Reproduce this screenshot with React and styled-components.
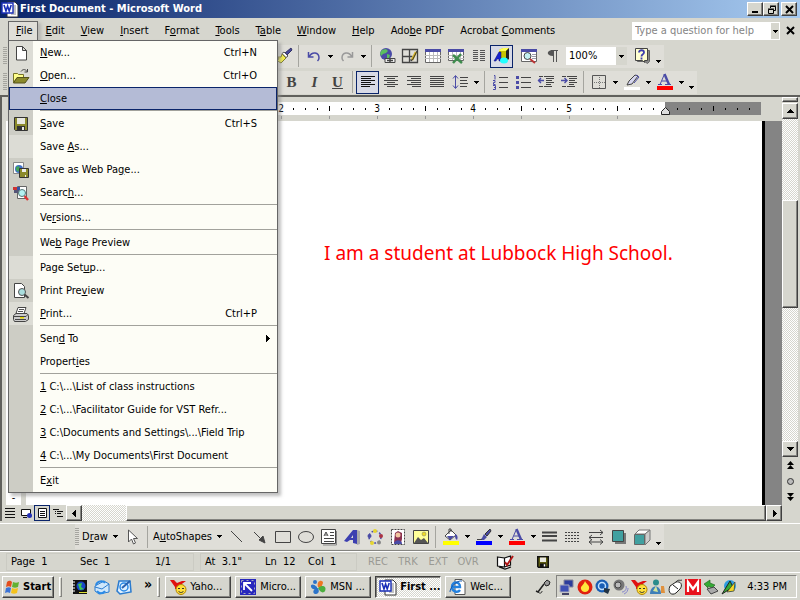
import React from 'react'
import { useState } from 'react'
import styled, { createGlobalStyle, css } from 'styled-components'

const face = '#d6d6ce'
const light = '#dfded8'
const navy = '#0a246a'

// icons, all on a 16 x 16 grid
const icons = {
    word: <>
        <path d="M5 1h8l3 3v12H5z" fill="#fff" stroke="#333" strokeWidth="1" />
        <path d="M9 5h5M11 7h3M11 9h3M11 11h3M9 13h5" stroke="#888" />
        <path d="M0 2h11v10H0z" fill="#fff" stroke="#1a2fb8" strokeWidth="1.4" />
        <path d="M2 4l2 6 1.600-5 1.600 5 2-6" fill="none" stroke="#1a2fb8" strokeWidth="1.600" />
    </>,
    page: <path d="M3.500 1.500h6l4 4v9.500h-10zM9.500 1.500v4h4" fill="#fff" stroke="#444" />,
    open: <>
        <path d="M.5 5.500h4l1 1h5v3h-6l-4 5z" fill="#ffff8c" stroke="#77752a" />
        <path d="M4 9.500h12l-4 5.500H.5z" fill="#8b8a2c" stroke="#55531c" />
        <path d="M8 3.500c2-3 5-2 6 0M14.500 1v3h-3" fill="none" stroke="#444" />
    </>,
    save: <>
        <path d="M1.500 1.500h13v13h-12l-1-1z" fill="#8b8a2c" stroke="#333" />
        <path d="M4 2h8v6H4z" fill="#e8e8e0" />
        <path d="M4 10h8v5H4z" fill="#333" />
        <path d="M9 11h2v3H9z" fill="#e8e8e0" />
    </>,
    saveWeb: <>
        <path d="M.5.5h10v11H.5z" fill="#fff" stroke="#888" />
        <circle cx="6" cy="7" r="4" fill="#3f6fc8" />
        <path d="M3 5l3-1 1 3-2 3-2-2z" fill="#41a45a" />
        <path d="M6.500 6.500h9v9h-9z" fill="#8b8a2c" stroke="#333" />
        <path d="M9 7h4v3H9zM12 13h1v2h-1z" fill="#eee" />
    </>,
    search: <>
        <path d="M4.500 1.500h9v12h-9z" fill="#fff" stroke="#666" />
        <path d="M0 2h4v3H0z" fill="#c33" /><path d="M4 2h3v3H4z" fill="#35a" /><path d="M1 5h5v3H1z" fill="#557" />
        <circle cx="9" cy="8" r="3.500" fill="#b4f1f1" stroke="#577" />
        <path d="M11.500 11l3.500 4" stroke="#d33" strokeWidth="2.400" />
    </>,
    preview: <>
        <path d="M1.500.5h7l3 3v11h-10z" fill="#fff" stroke="#444" />
        <circle cx="9" cy="9" r="3.500" fill="#a9dede" stroke="#555" />
        <path d="M11.500 11.500l4 3.500" stroke="#444" strokeWidth="2" />
    </>,
    print: <>
        <path d="M5 1.500h8l-2 6H3z" fill="#fff" stroke="#444" />
        <path d="M6 3.500h5M5 5.500h5" stroke="#555" />
        <path d="M3 7.500h11l1.500 2v4l-3 2H1.500l-1-2v-4z" fill="#ccc" stroke="#444" />
        <path d="M1 10.500h12l2-2M2 13.500h11" stroke="#444" fill="none" />
        <path d="M7 11h4v1.500H7z" fill="#e8d800" />
    </>,
    brush: <>
        <path d="M15 0l1 2-5 5-2-2z" fill="#45479c" stroke="#333366" />
        <path d="M8 4l4 4-2 1.500-4-4z" fill="#fff" stroke="#555" />
        <path d="M6 6l4 4-5 5-5-3 3-1-1-2 3 0z" fill="#f2ee4e" stroke="#7d7b32" />
    </>,
    undo: <path d="M2.500 4v5h5M3 9c3-6 10-5 10 1 0 1-.5 2-1.500 3" fill="none" stroke="#4a4ba6" strokeWidth="1.500" />,
    redo: <path d="M13.500 4v5h-5M13 9c-3-6-10-5-10 1 0 1 .5 2 1.500 3" fill="none" stroke="#999" strokeWidth="1.500" />,
    globe: <>
        <circle cx="7" cy="6" r="6" fill="#4a4ba6" />
        <path d="M3 2l4-1 2 2-2 2-3 1-2 2-1-3zM8 6l3 1-1 3-2 2z" fill="#5bbf5f" />
        <path d="M6 10.500h5v4H6zM11 10.500h5v4h-5z" fill="#eee" stroke="#444" />
        <path d="M8 12.500h6" stroke="#444" strokeWidth="1.500" />
    </>,
    tableEdit: <>
        <path d="M.5 1.500h15v13H.5zM7.500 1.500v13M.5 8.500h10" fill="none" stroke="#444" strokeWidth="1.300" />
        <path d="M14 4l-4 8" stroke="#d8b520" strokeWidth="2.500" />
        <path d="M15 3l-4.500 9-1.500 1v-2" stroke="#333" fill="none" />
    </>,
    table: <>
        <path d="M.5 1.500h15v13H.5z" fill="#fff" stroke="#666" />
        <path d="M0 1h16v3H0z" fill="#4a4ba6" />
        <path d="M0 7.500h16M0 10.500h16M4.500 4v10M8.500 4v10M12.500 4v10" stroke="#bbb" />
    </>,
    excel: <>
        <path d="M.5 1.500h15v11H.5z" fill="#fff" stroke="#666" />
        <path d="M0 1h16v3H0z" fill="#4a4ba6" />
        <path d="M0 7.500h16M0 10.500h16M4.500 4v8M8.500 4v8M12.500 4v8" stroke="#bbb" />
        <path d="M5 7l9 8M13 6L5 15" stroke="#3f8c4e" strokeWidth="2.500" />
    </>,
    columns: <path d="M2 2.500h5M2 4.500h5M2 6.500h5M2 8.500h5M2 10.500h5M2 12.500h5M9 2.500h5M9 4.500h5M9 6.500h5M9 8.500h5M9 10.500h5M9 12.500h5" stroke="#555" />,
    drawing: <>
        <path d="M5 2l4-2h6v11l-3 2H5z" fill="#c8c400" />
        <path d="M5 2l4-2h6l-3 3H5z" fill="#ffff55" />
        <path d="M12 3l3-3v11l-3 2z" fill="#222" />
        <path d="M0 13L5 4h2v9H5v-2H3l-1 2z" fill="#1822d0" stroke="#0a0f70" strokeWidth=".5" />
        <ellipse cx="10" cy="12.500" rx="4" ry="3" fill="#2ff" />
    </>,
    printPreview: <>
        <path d="M.5 1.500h15v12H.5z" fill="#fff" stroke="#666" />
        <path d="M0 1h16v3H0z" fill="#4a4ba6" />
        <path d="M11 6.500h4M11 8.500h4M11 10.500h4" stroke="#99a" />
        <circle cx="6.500" cy="8" r="3.500" fill="#c3f1f1" stroke="#444" />
        <path d="M9 11l5 4" stroke="#b33" strokeWidth="2" />
    </>,
    para: <><path d="M7 2.500h7M9.500 2v12M12.500 2v12" stroke="#555" fill="none" /><path d="M9 2c-7 0-7 6 0 6z" fill="#555" /></>,
    help: <>
        <path d="M3.500 2.500h12v11l-2 2-3-2h-7z" fill="#888" stroke="#666" />
        <path d="M1.500.5h12v12h-3v2l-2-2h-7z" fill="#ffffd0" stroke="#444" />
        <path d="M5 4.500c0-3 5-3 5 0 0 2-2.500 1.500-2.500 4M7.500 9.500v2" fill="none" stroke="#3e3fae" strokeWidth="1.800" />
    </>,
    left: <path d="M1 2.500h14M1 4.500h10M1 6.500h14M1 8.500h10M1 10.500h14M1 12.500h9" stroke="#111" />,
    center: <path d="M1 2.500h14M4 4.500h8M1 6.500h14M4 8.500h8M1 10.500h14M4 12.500h8" stroke="#444" />,
    right: <path d="M1 2.500h14M5 4.500h10M1 6.500h14M5 8.500h10M1 10.500h14M6 12.500h9" stroke="#444" />,
    justify: <path d="M1 2.500h14M1 4.500h14M1 6.500h14M1 8.500h14M1 10.500h14M1 12.500h14" stroke="#444" />,
    spacing: <>
        <path d="M8 3.500h8M8 6.500h7M8 9.500h8M8 12.500h7" stroke="#444" />
        <path d="M3.500 2v12M1 4.500l2.500-3 2.500 3M1 11.500l2.500 3 2.500-3" stroke="#4a4ba6" fill="none" />
    </>,
    numbers: <>
        <path d="M7 3.500h9M7 8.500h9M7 13.500h9" stroke="#444" />
        <path d="M2 1.500h1v4M1 6.500h2v2H1.500v2h2M1 11.500h2.500v4H1M2 13.500h1" stroke="#4a4ba6" fill="none" />
    </>,
    bullets: <>
        <path d="M6 3.500h10M6 8.500h10M6 13.500h10" stroke="#444" />
        <path d="M1 2h3v3H1zM1 7h3v3H1zM1 12h3v3H1z" fill="#4a4ba6" />
    </>,
    outdent: <>
        <path d="M1 2.500h4M6 2.500h10M8 4.500h8M8 6.500h6M8 8.500h8M8 10.500h5M1 12.500h4M6 12.500h8" stroke="#444" />
        <path d="M0 6.500h6M3 4L.5 6.500 3 9" stroke="#4a4ba6" strokeWidth="1.400" fill="none" />
    </>,
    indent: <>
        <path d="M1 2.500h4M6 2.500h10M8 4.500h8M8 6.500h6M8 8.500h8M8 10.500h5M1 12.500h4M6 12.500h8" stroke="#444" />
        <path d="M0 6.500h6M3.500 4L6 6.500 3.500 9" stroke="#4a4ba6" strokeWidth="1.400" fill="none" />
    </>,
    borders: <>
        <path d="M1.500 1.500h13v13h-13z" fill="none" stroke="#555" />
        <path d="M8.500 3v11M3 8.500h11" stroke="#777" strokeDasharray="1 1" />
    </>,
    highlight: <>
        <path d="M0 13h16v3H0z" fill="#fff" />
        <path d="M11 1l3 1-6 8-5 1 2-4z" fill="#d6d6ee" stroke="#444" />
        <path d="M12 1l3 2-5 6" fill="none" stroke="#4a4ba6" />
    </>,
    fontColor: <>
        <path d="M0 12h16v4H0z" fill="#f00" />
        <path d="M3 10.500L7.500 0M5 7h6M1 10.500h4M8 10.500h6" stroke="#4a4ba6" fill="none" />
        <path d="M7.500 0l4.500 10.500" stroke="#4a4ba6" strokeWidth="2.400" />
    </>,
    cursor: <path d="M4.500 1v12l3-3 2 5 2-1-2-4.500h4z" fill="#fff" stroke="#555" />,
    line: <path d="M2 2l11 11" stroke="#444" />,
    arrow: <path d="M2 3l8 8M13 14l-6-3 4-4z" stroke="#444" fill="#444" />,
    rect: <path d="M.5 2.500h15v11H.5z" stroke="#444" fill="none" />,
    ellipse: <ellipse cx="8" cy="8" rx="7.500" ry="5.500" stroke="#444" fill="none" />,
    textbox: <>
        <path d="M.5.5h14v14H.5z" fill="#fff" stroke="#444" />
        <path d="M15.500 2v14H2" stroke="#888" fill="none" />
        <path d="M3 7l2-4 2 4M4 6h2M9 3.500h4M9 6.500h4M3 9.500h10M3 12.500h10" stroke="#444" fill="none" />
    </>,
    wordart: <>
        <path d="M10 2l3-1 3 1v13l-3 1z" fill="#aaa" />
        <path d="M0 12L9 1h4v14l-4-1v-3H6l-3 2zM7 9h2V6z" fill="#3c3fb0" fillRule="evenodd" />
    </>,
    diagram: <>
        <circle cx="8" cy="8" r="6" fill="none" stroke="#4a4ba6" strokeWidth="1.500" strokeDasharray="2 2" />
        <circle cx="8" cy="2" r="2" fill="#e6d630" /><circle cx="2.500" cy="7" r="2" fill="#4a4ba6" />
        <circle cx="14" cy="7" r="2" fill="#a34" /><circle cx="5" cy="14" r="2" fill="#e6d630" />
        <circle cx="12" cy="13.500" r="2" fill="#888" />
    </>,
    clipart: <>
        <path d="M1.500.5h13v15h-13z" fill="#fff" stroke="#444" strokeDasharray="2 1" />
        <path d="M4 14l1-10 3-2 4 2v6l-1 4z" fill="#8b3050" />
        <circle cx="8" cy="6" r="2.500" fill="#f2c6a0" />
        <path d="M4 15c0-5 8-5 8 0z" fill="#4a4ba6" />
    </>,
    picture: <>
        <path d="M.5 1.500h15v13H.5z" fill="#ffff99" stroke="#444" />
        <path d="M1 14l4-6 3 3 3-2 4 5z" fill="#555" />
        <circle cx="11" cy="5" r="2" fill="#f0dc20" stroke="#777" strokeWidth=".5" />
    </>,
    fill: <>
        <path d="M0 12h16v4H0z" fill="#ff0" />
        <path d="M2 7l6-6 5 5-6 5z" fill="#fff" stroke="#444" />
        <path d="M12 5c3 1 3 4 2 6-2-1-2-3-2-6zM4 7h7l-4 4z" fill="#4a4ba6" />
        <path d="M6 5V0h2v3" stroke="#444" fill="none" />
    </>,
    pen: <>
        <path d="M0 12h16v4H0z" fill="#00f" />
        <path d="M14 0l1 2-4 5-2-2z" fill="#4a4ba6" stroke="#333" />
        <path d="M8 5l3 3-3 3H4l2-2z" fill="#4a4ba6" />
        <path d="M1 10.500h5" stroke="#444" />
    </>,
    lineStyle: <path d="M0 3.500h15M0 7h15M0 11.500h15" stroke="#444" strokeWidth="2" />,
    dashStyle: <path d="M0 3.500h15M0 6.500h15M0 9.500h15M0 12.500h15" stroke="#444" strokeDasharray="2 1" />,
    arrowStyle: <path d="M1 3.500h14M12 1l3 2.500-3 2.500M1 8.500h14M4 6l-3 2.500 3 2.500M1 13h14M12 10.500l3 2.500-3 2.500M4 10.500l-3 2.500 3 2.500" stroke="#444" fill="none" />,
    shadow: <><path d="M4 4h11v11H4z" fill="#777" /><path d="M1.500 1.500h11v11h-11z" fill="#41a0a0" stroke="#444" /></>,
    cube: <>
        <path d="M1 5l4-4h11l-5 4z" fill="#fff" stroke="#777" /><path d="M11 5l5-4v10l-5 5z" fill="#ccc" stroke="#777" />
        <path d="M.5 5.500h10v10H.5z" fill="#41a0a0" stroke="#666" />
    </>,
    normalView: <path d="M3 3.500h10M3 6.500h10M3 9.500h10M3 12.500h10" stroke="#111" />,
    webView: <><path d="M3.500 4.500h9v6h-9z" fill="#fff" stroke="#111" /><circle cx="11.500" cy="10.500" r="2.500" fill="#2431b4" /><path d="M5 12.500h4" stroke="#111" /></>,
    printView: <path d="M4.500 3.500h8v9h-8zM6 6.500h5M6 8.500h5M6 10.500h5" fill="#fff" stroke="#111" />,
    outlineView: <path d="M3 4.500h6M5 6.500h1M7 6.500h6M5 8.500h1M7 8.500h4M7 11.500h6" stroke="#111" />,
    book: <>
        <path d="M.5 3l7 1v9l-7-1zM7.500 4l6-2v9l-6 2zM2 13l6 2 6-2" fill="#fff" stroke="#111" strokeWidth="1.200" />
        <path d="M8 8l2 3 6-9" stroke="#b01818" strokeWidth="2" fill="none" />
    </>,
    disk: <>
        <path d="M1 1h14v14H2l-1-1z" fill="#5c5b10" stroke="#111" strokeWidth="2" />
        <path d="M4 2h8v6H4z" fill="#e8e8e0" />
        <path d="M4 10h8v5H4z" fill="#111" /><path d="M9 11h2v3H9z" fill="#fff" />
    </>,
    windows: <>
        <path d="M2 3c2-2 4-1 5 0L6 8C4 7 3 7 1 8z" fill="#e34d1d" /><path d="M8 3c2 1 4 1 6 0l-1 5c-2 1-4 1-6 0z" fill="#62b132" />
        <path d="M1 9c2-1 4-1 5 0l-1 5c-2-1-3-1-5 0z" fill="#3b73d6" /><path d="M7 9c2 1 4 1 6 0l-1 5c-2 1-4 1-6 0z" fill="#f4c21c" />
    </>,
    desktop: <>
        <path d="M1 1h14v14H1z" fill="#111" /><path d="M0 3h3M0 6h3M0 9h3M0 12h3" stroke="#fff" />
        <circle cx="9" cy="7" r="4.500" fill="#1848c8" /><path d="M6 5l4-1-1 4 3 2-4 1z" fill="#3cc850" /><path d="M7 13h8v1H7z" fill="#dd3" />
    </>,
    mail: <>
        <path d="M1 7l9-5 5 3v8l-10 2-4-3z" fill="#cfe7fb" stroke="#2a7bcf" /><path d="M1 8l7 2 7-5" fill="none" stroke="#2a7bcf" />
        <path d="M2 6c1-4 7-5 9-2M11 12c-2 3-6 3-8 0" stroke="#2a8ae6" strokeWidth="2" fill="none" />
    </>,
    notes: <>
        <path d="M3 2h11l1 11-11 2-3-3z" fill="#dff0ff" stroke="#2a7bcf" strokeWidth="1.500" />
        <circle cx="8" cy="8" r="4" fill="none" stroke="#2a8ae6" strokeWidth="1.500" /><path d="M6 9l8-7" stroke="#2a62af" strokeWidth="2" />
    </>,
    yahoo: <>
        <path d="M0 1h4l3 3 5-2h4l-7 5v3H5V8z" fill="#e01010" /><circle cx="11" cy="10.500" r="5" fill="#ffe03c" stroke="#b48400" />
        <path d="M8 9.500h2M12 9.500h2M8.500 12c1 2 4 2 5 0" stroke="#333" fill="none" />
    </>,
    blueArrow: <><path d="M0 0h16v16H0z" fill="#2727bd" /><path d="M4 11V4h7M4 4l8 8" stroke="#fff" strokeWidth="1.800" fill="none" /><path d="M1.500 1.500h13v13h-13z" fill="none" stroke="#aab" strokeDasharray="2 3" /></>,
    msn: <>
        <path d="M8 8C6 1 13 0 13 4l-2 5z" fill="#ed7623" /><path d="M7 8C1 2-1 8 3 10l4 1z" fill="#2c74c9" />
        <path d="M8 9c5-4 9-1 7 3-2 3-5 1-7-3z" fill="#4bae3f" /><path d="M8 9c-5 0-6 5-3 6 3 0 5-2 3-6z" fill="#2c74c9" /><circle cx="5" cy="3" r="2" fill="#2c74c9" />
    </>,
    ie: <>
        <path d="M5 .5h7l3 3v12H5z" fill="#fff" stroke="#555" />
        <path d="M2 8h8c0-6-8-6-8 0 0 5 6 6 8 3" fill="none" stroke="#2382e0" strokeWidth="2.400" /><path d="M0 13C0 8 7 1 12 2" fill="none" stroke="#155bb0" />
    </>,
    mic: <><path d="M12 1l3 2-1 3-3 1-2-3z" fill="#999" stroke="#222" /><path d="M9 5L3 13l-2-1" stroke="#222" strokeWidth="1.500" fill="none" /><path d="M3 13c2 2 4 1 4-1" stroke="#222" fill="none" /></>,
    network: <><path d="M5 1h9v7H5z" fill="#2b3c9c" stroke="#889" /><path d="M1 6h9v7H1z" fill="#3d4fb4" stroke="#aab" /><path d="M3 15h7" stroke="#446" strokeWidth="2" /></>,
    flame: <><circle cx="8" cy="8" r="7.500" fill="#e02010" /><path d="M8 2c1 3 5 4 4 8-1 4-7 4-8 0-1-3 3-4 4-8z" fill="#ffe63c" /></>,
    disc: <><circle cx="7" cy="7" r="6.500" fill="#195eb5" /><circle cx="7" cy="7" r="3.500" fill="none" stroke="#bfe0ff" strokeWidth="1.500" /><path d="M9 9l6 1-2 5-4-2z" fill="#234" /></>,
    speaker: <><circle cx="6" cy="6" r="5.500" fill="#777" /><circle cx="5" cy="6" r="3" fill="#bbb" stroke="#444" /><path d="M9 13c3 0 5-3 4-6M11 15c3-1 4-4 4-6" stroke="#88c" fill="none" /></>,
    person: <><circle cx="7" cy="3.500" r="3" fill="#2b8c8c" /><path d="M1 15c0-10 11-10 11 0z" fill="#3f7fb8" /><path d="M4 12l3-5 2 6z" fill="#d6e59a" /><path d="M12 7h3l1 7h-4z" fill="#e0913d" /></>,
    mouse: <path d="M3 7l6-4c5-1 7 3 4 7l-4 4c-4 3-9 0-6-7zM6 6l5 4M9 3c2-3 4-1 6-2" fill="#fff" stroke="#222" />,
    mcafee: <><path d="M0 0h16v16H0z" fill="#e8121c" /><path d="M3 13V3l5 7 5-7v10" stroke="#fff" strokeWidth="2.200" fill="none" /></>,
    eject: <><path d="M1 5l6-4v3l5 2-3 3-4-2v2z" fill="#35aa35" stroke="#176017" strokeWidth=".6" /><path d="M4 10l7-2 4 4-7 3z" fill="#aaa" stroke="#444" /></>,
    bird: <><circle cx="9" cy="7" r="6" fill="#2e9de0" /><path d="M1 15L9 2l3 6z" fill="#35aa35" stroke="#222" /><path d="M6 13l8-10-1 9z" fill="#f5d728" stroke="#222" strokeWidth=".6" /></>,
}

const Icon = ({ name }) => <Glyph viewBox="0 0 16 16" aria-hidden="true">{icons[name]}</Glyph>

const Arrow = ({ dir = 'drop' }) => {
    const d = { drop: 'M1 2h5v1H5v1H4v1H3V4H2V3H1z', down: 'M0 1h7L3.500 5z', up: 'M0 5h7L3.500 1z', left: 'M5 0v7L1 3.500z', right: 'M2 0v7l4-3.500z' }
    return <Tip viewBox="0 0 7 7" aria-hidden="true"><path d={d[dir]} /></Tip>
}

// "&" stands before the access key
const Label = ({ text }) => {
    const at = text.indexOf('&')
    if (at < 0) return <span>{text}</span>
    return <span>{text.slice(0, at)}<u>{text[at + 1]}</u>{text.slice(at + 2)}</span>
}

const fileMenu = [
    { text: '&New...', keys: 'Ctrl+N', icon: 'page' },
    { text: '&Open...', keys: 'Ctrl+O', icon: 'open' },
    { text: '&Close', active: true },
    null,
    { text: '&Save', keys: 'Ctrl+S', icon: 'save', rare: true },
    { text: 'Save &As...' },
    { text: 'Save as Web Pa&ge...', icon: 'saveWeb', rare: true },
    { text: 'Searc&h...', icon: 'search', rare: true },
    null,
    { text: 'Ve&rsions...', rare: true },
    null,
    { text: 'We&b Page Preview', rare: true },
    null,
    { text: 'Page Set&up...' },
    { text: 'Print Pre&view', icon: 'preview', rare: true },
    { text: '&Print...', keys: 'Ctrl+P', icon: 'print' },
    null,
    { text: 'Sen&d To', rare: true, more: true },
    { text: 'Propert&ies', rare: true },
    null,
    { text: '&1 C:\\...\\List of class instructions', rare: true },
    { text: '&2 C:\\...\\Facilitator Guide for VST Refr...', rare: true },
    { text: '&3 C:\\Documents and Settings\\...\\Field Trip', rare: true },
    { text: '&4 C:\\...\\My Documents\\First Document', rare: true },
    null,
    { text: 'E&xit', rare: true },
]

const menus = ['&Edit', '&View', '&Insert', 'F&ormat', '&Tools', 'T&able', '&Window', '&Help', 'Ado&be PDF', 'Acrobat &Comments']

const tasks = [
    ['yahoo', 'Yaho...'],
    ['blueArrow', 'Micro...'],
    ['msn', 'MSN ...'],
    ['word', 'First ...'],
    ['ie', 'Welc...'],
]

const tray = ['network', 'flame', 'disc', 'speaker', 'yahoo', 'person', 'mouse', 'mcafee', 'eject', 'bird']

// "|" is a divider, a trailing "+" adds a drop-down arrow
const Tools = ({ list, on }) => list.map((t, i) => {
    if (t === '|') return <Divider key={i} />
    const name = t.replace('+', '')
    return (
        <React.Fragment key={i}>
            <ToolButton aria-label={name} $on={name === on}><Icon name={name} /></ToolButton>
            {t.endsWith('+') && <DropButton aria-label={name + ' options'}><Arrow /></DropButton>}
        </React.Fragment>
    )
})

const FileMenu = () => (
    <Menu role="menu">
        {fileMenu.map((item, i) => item ? (
            <MenuItem key={i} role="menuitem" $active={item.active}>
                <Gutter $rare={item.rare} $active={item.active}>{item.icon && <Icon name={item.icon} />}</Gutter>
                <Label text={item.text} />
                {item.keys && <Keys>{item.keys}</Keys>}
                {item.more && <More><Arrow dir="right" /></More>}
            </MenuItem>
        ) : <MenuLine key={i}><Gutter $rare /><hr /></MenuLine>)}
    </Menu>
)

const Ruler = () => {
    const mark = (i) => i % 8 === 0 ? <b>{i / 8 || ''}</b> : i % 4 === 0 ? <Tick /> : <Dot />
    return (
        <RulerBar>
            <RulerScale>
                <RulerLive>
                    {Array.from({ length: 48 }, (_, i) => <Cell key={i}>{mark(i)}</Cell>)}
                </RulerLive>
                <RulerRest>
                    <Indent viewBox="0 0 9 8"><path d="M.5 7.500v-3l4-4 4 4v3z" fill="#ddd" stroke="#222" /></Indent>
                    {Array.from({ length: 7 }, (_, i) => <Cell key={i}>{mark(i + 49)}</Cell>)}
                </RulerRest>
            </RulerScale>
            <TabStops>{Array.from({ length: 12 }, (_, i) => <i key={i} />)}</TabStops>
        </RulerBar>
    )
}

const App = () => {
    const [open, setOpen] = useState(true)
    const [task, setTask] = useState('word')

    return (
        <Screen>
            <Global />
            <TitleBar>
                <Icon name="word" />
                <h1>First Document - Microsoft Word</h1>
                <WindowButton aria-label="Minimize"><svg viewBox="0 0 9 9"><path d="M1 7h6" /></svg></WindowButton>
                <WindowButton aria-label="Restore"><svg viewBox="0 0 9 9"><path d="M3.500 3V1.500h5v4H7M1.500 4.500h5v4h-5zM3 1h6M1 4h6" strokeWidth="1" /></svg></WindowButton>
                <WindowButton aria-label="Close" $apart><svg viewBox="0 0 9 9"><path d="M1 1l7 7M8 1L1 8" /></svg></WindowButton>
            </TitleBar>

            <MenuBar>
                <MenuHost>
                    <MenuButton $open={open} onClick={() => setOpen(!open)}><Label text="&File" /></MenuButton>
                    {open && <FileMenu />}
                </MenuHost>
                {menus.map((m) => <MenuButton key={m}><Label text={m} /></MenuButton>)}
                <AskBox>
                    <input aria-label="Question" placeholder="Type a question for help" />
                    <DropButton aria-label="Recent questions"><Arrow /></DropButton>
                </AskBox>
                <CloseDoc aria-label="Close document"><svg viewBox="0 0 9 9"><path d="M1 1l7 7M8 1L1 8" /></svg></CloseDoc>
            </MenuBar>

            <ToolBar>
                <Grip />
                <Visible $from={264}>
                    <Tools list={['brush', '|', 'undo+', 'redo+', '|', 'globe', 'tableEdit', 'table', 'excel', 'columns', 'drawing']} on="drawing" />
                    <Gap />
                    <Tools list={['printPreview', 'para']} />
                    <ZoomBox>
                        <select aria-label="Zoom" defaultValue="100%"><option>100%</option><option>75%</option></select>
                        <Arrow />
                    </ZoomBox>
                    <Tools list={['help']} />
                    <Overflow aria-label="Toolbar options"><Arrow /></Overflow>
                </Visible>
            </ToolBar>
            <ToolBar>
                <Grip />
                <Visible $from={272}>
                    <LetterButton><b>B</b></LetterButton>
                    <LetterButton><i>I</i></LetterButton>
                    <LetterButton><u>U</u></LetterButton>
                    <Tools list={['|', 'left', 'center', 'right', 'justify', 'spacing+', '|', 'numbers', 'bullets', 'outdent', 'indent', '|', 'borders+', 'highlight+', 'fontColor+']} on="left" />
                    <Overflow aria-label="Toolbar options"><Arrow /></Overflow>
                </Visible>
            </ToolBar>

            <Workspace>
                <Editor>
                    <Ruler />
                    <Sheet>
                        <SideRuler>-</SideRuler>
                        <Page><p>I am a student at Lubbock High School.</p></Page>
                        <Desk />
                    </Sheet>
                    <Bottom>
                        {['normalView', 'webView', 'printView', 'outlineView'].map((v) => (
                            <ViewButton key={v} aria-label={v} $on={v === 'printView'}><Icon name={v} /></ViewButton>
                        ))}
                        <ScrollButton aria-label="Scroll left"><Arrow dir="left" /></ScrollButton>
                        <Track $size={44} />
                        <Thumb $grow />
                        <ScrollButton aria-label="Scroll right"><Arrow dir="right" /></ScrollButton>
                    </Bottom>
                </Editor>
                <SideScroll>
                    <Splitter />
                    <ScrollButton aria-label="Scroll up"><Arrow dir="up" /></ScrollButton>
                    <Track $size={81} />
                    <Thumb $size={108} />
                    <Track $grow />
                    <ScrollButton aria-label="Scroll down"><Arrow dir="down" /></ScrollButton>
                    <Browse>
                        <button aria-label="Previous page"><svg viewBox="0 0 7 8"><path d="M0 4h7L3.500 0zM0 8h7L3.500 4z" /></svg></button>
                        <button aria-label="Browse object"><Ball /></button>
                        <button aria-label="Next page"><svg viewBox="0 0 7 8"><path d="M0 0h7L3.500 4zM0 4h7L3.500 8z" /></svg></button>
                    </Browse>
                </SideScroll>
            </Workspace>

            <DrawBar>
                <DrawTools>
                    <Grip />
                    <TextButton><Label text="D&raw" /><Arrow /></TextButton>
                    <Tools list={['cursor', '|']} />
                    <TextButton><Label text="A&utoShapes" /><Arrow /></TextButton>
                    <Tools list={['line', 'arrow', 'rect', 'ellipse', 'textbox', 'wordart', 'diagram', 'clipart', 'picture', '|', 'fill+', 'pen+', 'fontColor+', 'lineStyle', 'dashStyle', 'arrowStyle', 'shadow', 'cube']} />
                    <Overflow aria-label="Toolbar options"><Arrow /></Overflow>
                </DrawTools>
            </DrawBar>

            <StatusBar>
                <StatusPane $cols="69px 75px 34px"><span>Page&nbsp; 1</span><span>Sec&nbsp; 1</span><span>1/1</span></StatusPane>
                <StatusPane $cols="60px 43px 44px"><span>At&nbsp; 3.1"</span><span>Ln&nbsp; 12</span><span>Col&nbsp; 1</span></StatusPane>
                <Modes>{['REC', 'TRK', 'EXT', 'OVR'].map((m) => <span key={m}>{m}</span>)}</Modes>
                <Icon name="book" />
                <SmallIcon><Icon name="disk" /></SmallIcon>
            </StatusBar>

            <TaskBar>
                <StartButton><Icon name="windows" />Start</StartButton>
                <Notch />
                <Quick>
                    {['desktop', 'mail', 'notes'].map((q) => <button key={q} aria-label={q}><Icon name={q} /></button>)}
                    <b>»</b>
                </Quick>
                <Notch />
                <TaskList>
                    {tasks.map(([icon, text]) => (
                        <TaskButton key={text} $on={task === icon} onClick={() => setTask(icon)}><Icon name={icon} />{text}</TaskButton>
                    ))}
                </TaskList>
                <Icon name="mic" />
                <Tray>
                    {tray.map((t) => <Icon key={t} name={t} />)}
                    <time>4:33 PM</time>
                </Tray>
            </TaskBar>
        </Screen>
    )
}

export default App

const Global = createGlobalStyle`
    *{
        box-sizing: border-box;
    }
    body{
        margin: 0;
        background: ${face};
    }
    body, button, input, select{
        font-family: Tahoma, "DejaVu Sans Condensed", "DejaVu Sans", sans-serif;
        font-size: 11px;
        line-height: 14px;
        color: #000;
    }
    button{
        display: flex;
        align-items: center;
        padding: 0;
        border: 0;
        background: none;
        white-space: nowrap;
    }
    u{
        text-underline-offset: 1px;
    }
`
const raised = css`
    border: 1px solid;
    border-color: #fff #404040 #404040 #fff;
    box-shadow: inset -1px -1px 0 #848480;
    background: ${face};
`
const dither = css`
    background: repeating-conic-gradient(#fff 0 25%, ${face} 0 50%) 0 0 / 2px 2px;
`
const Screen = styled.div`
    display: flex;
    flex-direction: column;
    min-height: 100vh;
    background: ${face};
`
const Glyph = styled.svg`
    width: 16px;
    height: 16px;
    flex: none;
    overflow: visible;
`
const Tip = styled.svg`
    width: 7px;
    height: 7px;
    flex: none;
    shape-rendering: crispEdges;
`
const TitleBar = styled.header`
    display: flex;
    align-items: center;
    height: 18px;
    padding: 0 3px 0 2px;
    background: linear-gradient(to right, ${navy}, #a6caf0);
    h1{
        flex: 1;
        margin: 0 0 0 2px;
        font-size: 11px;
        line-height: 16px;
        color: #fff;
    }
`
const WindowButton = styled.button`
    ${raised}
    justify-content: center;
    width: 16px;
    height: 14px;
    margin-left: ${(p) => p.$apart ? '2px' : '0'};
    svg{
        width: 9px;
        height: 9px;
        fill: none;
        stroke: #000;
        stroke-width: 2;
    }
`
const MenuBar = styled.nav`
    display: flex;
    height: 25px;
    padding: 3px 4px 0 8px;
`
const MenuHost = styled.div`
    position: relative;
`
const MenuButton = styled.button`
    height: 20px;
    padding: 0 7px;
    border: 1px solid transparent;
    ${(p) => p.$open && css`
        padding-right: 4px;
        border-color: #666;
        border-bottom-color: ${light};
        background: ${light};
        box-shadow: 3px 2px 3px #9998;
    `}
`
const Menu = styled.div`
    position: absolute;
    z-index: 5;
    top: 19px;
    left: 0;
    width: 270px;
    border: 1px solid #666;
    background: #fdfdf6;
    box-shadow: 3px 3px 3px #8888;
`
const Gutter = styled.span`
    display: flex;
    align-items: center;
    justify-content: center;
    align-self: stretch;
    width: 24px;
    margin-right: 7px;
    background: ${(p) => p.$active ? 'none' : p.$rare ? '#cdcdc5' : '#dcdcd5'};
`
const MenuItem = styled.button`
    width: 100%;
    height: 23px;
    ${(p) => p.$active && css`
        background: #b4bbd6;
        outline: 1px solid ${navy};
        outline-offset: -1px;
    `}
`
const Keys = styled.span`
    margin-left: auto;
    padding-right: 20px;
`
const More = styled(Keys)`
    padding-right: 6px;
`
const MenuLine = styled.div`
    display: flex;
    height: 2px;
    hr{
        flex: 1;
        height: 1px;
        margin: 0;
        border: 0;
        background: #a2a29c;
    }
`
const AskBox = styled.div`
    display: flex;
    width: 148px;
    height: 18px;
    margin: 1px 4px 0 auto;
    background: #fff;
    input{
        flex: 1;
        min-width: 0;
        padding: 0 3px;
        border: 0;
        background: none;
    }
    input::placeholder{
        color: #848484;
    }
    button{
        background: ${face};
        border: 1px solid #fff;
    }
`
const CloseDoc = styled.button`
    justify-content: center;
    width: 12px;
    height: 19px;
    svg{
        width: 9px;
        stroke: #000;
        stroke-width: 2;
    }
`
const ToolBar = styled.div`
    display: flex;
    align-items: center;
    height: 26px;
    padding-left: 3px;
`
const Grip = styled.span`
    width: 4px;
    height: 18px;
    margin-right: 1px;
    background: repeating-linear-gradient(#a5a59f 0 1px, transparent 1px 2px);
`
const Visible = styled.div`
    display: flex;
    align-items: center;
    padding-left: ${(p) => p.$from}px;
    background: ${light};
`
const ToolButton = styled.button`
    justify-content: center;
    flex: none;
    width: 23px;
    height: 23px;
    border: 1px solid ${(p) => p.$on ? navy : 'transparent'};
    background: ${(p) => p.$on ? '#d8dae6' : 'none'};
`
const LetterButton = styled(ToolButton)`
    font-family: "Liberation Serif", serif;
    font-size: 15px;
    font-weight: bold;
    color: #444;
`
const DropButton = styled.button`
    justify-content: center;
    flex: none;
    width: 10px;
`
const Divider = styled.span`
    width: 1px;
    height: 22px;
    margin: 0 3px;
    background: #a5a59f;
`
const Gap = styled.span`
    width: 4px;
`
const Overflow = styled.button`
    align-self: flex-end;
    height: 12px;
    padding: 0 2px;
`
const ZoomBox = styled.div`
    display: flex;
    align-items: center;
    height: 18px;
    margin: 0 3px;
    padding-right: 2px;
    background: linear-gradient(to left, ${face} 11px, #fff 11px);
    select{
        width: 52px;
        padding: 0 3px;
        border: 0;
        appearance: none;
        background: none;
    }
`
const TextButton = styled.button`
    gap: 4px;
    padding: 0 2px;
`
const Workspace = styled.main`
    display: flex;
    flex: 1;
    min-height: 0;
    padding-right: 2px;
    border-top: 2px solid #60605c;
    border-left: 2px solid #60605c;
`
const Editor = styled.section`
    display: flex;
    flex: 1;
    flex-direction: column;
    min-width: 0;
`
const RulerBar = styled.div`
    height: 24px;
    padding-top: 5px;
`
const RulerScale = styled.div`
    display: flex;
    height: 13px;
    padding-left: 81px;
    font-size: 10px;
`
const RulerLive = styled.div`
    display: flex;
    padding-right: 6px;
    background: #fff;
`
const RulerRest = styled.div`
    position: relative;
    display: flex;
    padding: 0 6px;
    background: #848484;
`
const Cell = styled.span`
    display: flex;
    align-items: center;
    justify-content: center;
    width: 12px;
    b{
        font-weight: normal;
    }
`
const Dot = styled.i`
    width: 1px;
    height: 2px;
    background: #000;
`
const Tick = styled(Dot)`
    height: 5px;
`
const Indent = styled.svg`
    position: absolute;
    left: -4px;
    bottom: 0;
    width: 9px;
    height: 8px;
`
const TabStops = styled.div`
    display: flex;
    padding-left: 87px;
    i{
        width: 48px;
        height: 3px;
        margin-top: 1px;
        border-left: 1px solid #999;
    }
`
const Sheet = styled.div`
    display: flex;
    flex: 1;
`
const SideRuler = styled.div`
    display: flex;
    align-items: flex-end;
    justify-content: center;
    width: 15px;
    margin: 0 5px 0 4px;
    background: #fff;
`
const Page = styled.article`
    flex: 1;
    padding: 119px 0 0 298px;
    border-right: 3px solid #000;
    background: #fff;
    p{
        margin: 0;
        font-family: "Comic Sans MS", "Noto Sans", sans-serif;
        font-size: 19px;
        line-height: 26px;
        color: #f00;
        white-space: nowrap;
    }
`
const Desk = styled.div`
    width: 17px;
    background: #848484;
`
const Bottom = styled.div`
    display: flex;
    height: 16px;
`
const ViewButton = styled.button`
    justify-content: center;
    width: 16px;
    height: 16px;
    border: 1px solid ${(p) => p.$on ? navy : 'transparent'};
`
const ScrollButton = styled.button`
    ${raised}
    justify-content: center;
    flex: none;
    width: 16px;
    height: 16px;
`
const Track = styled.div`
    ${dither}
    flex: ${(p) => p.$grow ? '1' : `0 0 ${p.$size}px`};
`
const Thumb = styled.div`
    ${raised}
    flex: ${(p) => p.$grow ? '1' : `0 0 ${p.$size}px`};
`
const SideScroll = styled.aside`
    display: flex;
    flex-direction: column;
    width: 16px;
`
const Splitter = styled.div`
    ${raised}
    height: 5px;
    margin-bottom: 1px;
`
const Browse = styled.div`
    display: flex;
    flex-direction: column;
    height: 64px;
    button{
        justify-content: center;
        height: 16px;
    }
    svg{
        width: 7px;
        height: 8px;
    }
`
const Ball = styled.span`
    width: 7px;
    height: 7px;
    border: 1px solid #333;
    border-radius: 50%;
    background: #bbb;
`
const DrawBar = styled.div`
    display: flex;
    margin-top: 2px;
    padding: 0 0 1px 75px;
    border-top: 1px solid #fff;
    border-bottom: 1px solid #848480;
`
const DrawTools = styled.div`
    display: flex;
    align-items: center;
    height: 25px;
    background: ${light};
`
const StatusBar = styled.footer`
    display: flex;
    align-items: center;
    height: 21px;
    padding-left: 6px;
    border-top: 1px solid #fff;
`
const StatusPane = styled.div`
    display: grid;
    grid-template-columns: ${(p) => p.$cols};
    margin-right: 6px;
    padding: 1px 4px;
    border: 1px solid #cbcbc3;
    white-space: nowrap;
`
const Modes = styled.div`
    display: flex;
    margin-right: 14px;
    color: #9a9a94;
    span{
        width: 30px;
        text-align: center;
    }
`
const SmallIcon = styled.span`
    display: flex;
    margin-left: 24px;
    svg{
        width: 12px;
        height: 12px;
    }
`
const TaskBar = styled.footer`
    display: flex;
    align-items: center;
    height: 28px;
    padding: 0 3px 0 2px;
    border-top: 1px solid #fff;
`
const StartButton = styled.button`
    ${raised}
    gap: 2px;
    width: 52px;
    height: 22px;
    padding-left: 2px;
    font-weight: bold;
`
const Notch = styled.span`
    width: 3px;
    height: 20px;
    margin: 0 5px;
    border: 1px solid;
    border-color: #fff #848480 #848480 #fff;
`
const Quick = styled.div`
    display: flex;
    align-items: center;
    gap: 6px;
    padding-left: 5px;
    b{
        padding: 0 0 6px 6px;
        font-size: 14px;
    }
`
const TaskList = styled.div`
    display: flex;
    flex: 1;
    gap: 4px;
`
const TaskButton = styled.button`
    ${raised}
    gap: 4px;
    width: 66px;
    height: 22px;
    padding-left: 4px;
    overflow: hidden;
    ${(p) => p.$on && css`
        ${dither}
        border-color: #404040 #fff #fff #404040;
        box-shadow: inset 1px 1px 0 #848480;
        font-weight: bold;
    `}
`
const Tray = styled.div`
    display: flex;
    align-items: center;
    gap: 2px;
    height: 23px;
    margin-left: 5px;
    padding: 0 9px 0 2px;
    border: 1px solid;
    border-color: #848480 #fff #fff #848480;
    time{
        margin-left: 8px;
        white-space: nowrap;
    }
`
